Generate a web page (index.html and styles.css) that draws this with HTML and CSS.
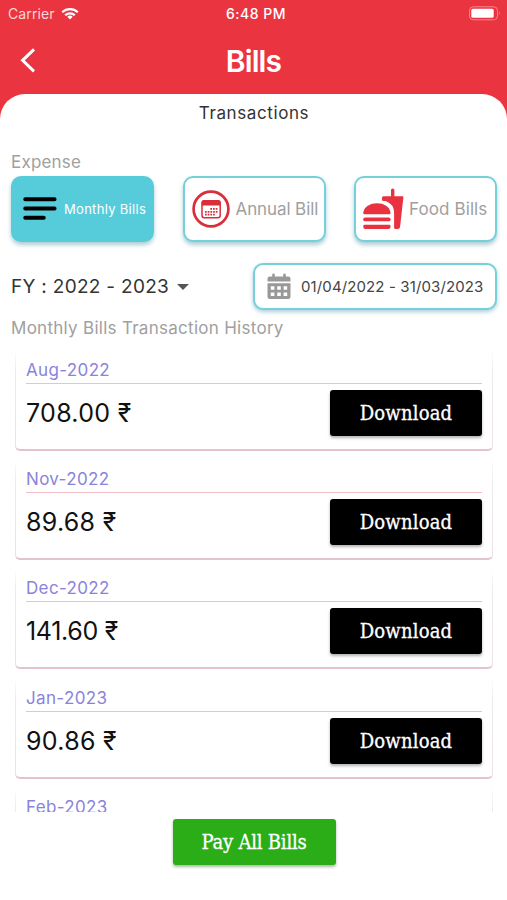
FILE: index.html
```html
<!DOCTYPE html>
<html lang="en">
<head>
  <meta charset="UTF-8" />
  <title>Bills</title>
  <link rel="stylesheet" href="styles.css">
</head>
<body>
  <header class="header">
    <div class="status">
      <div class="carrier">
        <span>Carrier</span>
        <svg width="18" height="13" viewBox="0 0 18 13" fill="none" stroke="#fff" stroke-width="2.2">
          <path d="M1.2 5.2a11.2 11.2 0 0 1 15.6 0M4.2 8.3a6.8 6.8 0 0 1 9.6 0" />
          <path d="M6.3 9.8a3.9 3.9 0 0 1 5.4 0L9 12.5z" fill="#fff" stroke="none" />
        </svg>
      </div>
      <div class="time">6:48 PM</div>
      <svg class="battery" width="32" height="15" viewBox="0 0 32 15">
        <rect x="0.5" y="0.8" width="28" height="13" rx="3.8" fill="none" stroke="#f28a91" />
        <rect x="2.3" y="2.8" width="22.4" height="9" rx="1.6" fill="#fff" />
        <path d="M30 5.3q1.6 2 0 4z" fill="#f6a0a5" />
      </svg>
    </div>
    <div class="navbar">
      <svg class="back" width="16" height="26" viewBox="0 0 16 26" fill="none" stroke="#fff" stroke-width="3">
        <path d="M14 1.4L2.6 12.3l11.4 11" />
      </svg>
      <h1>Bills</h1>
    </div>
  </header>

  <main class="sheet">
    <h2>Transactions</h2>
    <div class="label">Expense</div>

    <div class="tabs">
      <button class="tab active">
        <svg width="34" height="24" viewBox="0 0 34 24" stroke="#000" stroke-width="3.9" stroke-linecap="round">
          <path d="M2.2 2.3h29.4M2.2 11.5h29.4M2.2 20.7h18.6" />
        </svg>
        <span>Monthly Bills</span>
      </button>
      <button class="tab annual">
        <svg width="38" height="38" viewBox="0 0 38 38">
          <circle cx="19" cy="19" r="17.4" fill="none" stroke="#d92f3b" stroke-width="2.7" />
          <rect x="10" y="10.7" width="18.2" height="17" rx="2.2" fill="none" stroke="#d92f3b" stroke-width="1.5" />
          <path d="M9.7 15.5v-3q0-2.2 2.2-2.2h14.4q2.2 0 2.2 2.2v3z" fill="#d92f3b" />
          <path d="M18.3 18.8h8M13 21.8h13.3M13 24.7h10.6" stroke="#d92f3b" stroke-width="1.7" stroke-dasharray="1.7 1" />
        </svg>
        <span>Annual Bill</span>
      </button>
      <button class="tab food">
        <svg width="41" height="42" viewBox="0 0 41 42" fill="#e8323f">
          <path d="M1 26.2q-.8 0-.7-1.6C1.2 18.7 7 15.3 14 15.3s12.6 3.4 13.5 9.3q.1 1.6-.7 1.6z" />
          <rect x="0.2" y="29.5" width="27.4" height="3.8" rx="1.9" />
          <path d="M1.5 36.7h24.8q1.2 0 1.2 1.3v1q0 2-2 2H2.300q-2 0-2-2v-1q0-1.300 1.200-1.300z" />
          <path d="M28 8.200V2q0-1.500 1.700-1.500T31.400 2v6.200h8.100q1 0 .9 1L37.100 38.800q-.3 2.200-2.500 2.200h-2q-1.500 0-1.500-1.500V25q0-9-8.500-12h-2.100q-1.500 0-1.500-1.500v-1.800q0-1.500 1.500-1.500z" />
        </svg>
        <span>Food Bills</span>
      </button>
    </div>

    <div class="filters">
      <div class="year">
        <span>FY : 2022 - 2023</span>
        <i class="caret"></i>
      </div>
      <button class="range">
        <svg width="24" height="27" viewBox="0 0 24 27">
          <path d="M0.5 8.5V5.8q0-2.300 2.300-2.300h2.400V1.500q0-1 1.300-1t1.300 1v2h8.400v-2q0-1 1.300-1t1.300 1v2h2.400q2.300 0 2.300 2.300v2.700z" fill="#999" />
          <path d="M0.5 10.200h23v13.500q0 2.300-2.300 2.300H2.800q-2.300 0-2.300-2.300z" fill="#999" />
          <path d="M3.800 14.900h3.600M10.200 14.900h3.600M16.600 14.900h3.600M3.800 21.200h3.600M10.200 21.200h3.600M16.600 21.200h3.600" stroke="#fff" stroke-width="3.500" />
        </svg>
        <span>01/04/2022 - 31/03/2023</span>
      </button>
    </div>

    <div class="label history">Monthly Bills Transaction History</div>

    <div class="list">
      <div class="bill">
        <div class="month">Aug-2022</div>
        <div class="row">
          <span class="amount">708.00 ₹</span>
          <button class="download">Download</button>
        </div>
      </div>
      <div class="bill">
        <div class="month">Nov-2022</div>
        <div class="row">
          <span class="amount">89.68 ₹</span>
          <button class="download">Download</button>
        </div>
      </div>
      <div class="bill">
        <div class="month">Dec-2022</div>
        <div class="row">
          <span class="amount narrow">141.60 ₹</span>
          <button class="download">Download</button>
        </div>
      </div>
      <div class="bill">
        <div class="month">Jan-2023</div>
        <div class="row">
          <span class="amount">90.86 ₹</span>
          <button class="download">Download</button>
        </div>
      </div>
      <div class="bill">
        <div class="month">Feb-2023</div>
        <div class="row"></div>
      </div>
    </div>

    <button class="pay">Pay All Bills</button>
  </main>
</body>
</html>
```

FILE: styles.css
```css
* {
  box-sizing: border-box;
}

body {
  margin: 0;
  height: 900px;
  overflow: hidden;
  background: #ea3440;
  font-family: Inter, Roboto, sans-serif;
}

button {
  border: none;
  padding: 0;
  font-family: inherit;
}

svg {
  display: block;
  flex: none;
}

h1, h2 {
  margin: 0;
}

span {
  white-space: nowrap;
}

.header {
  height: 94px;
  color: #fff;
}

.status {
  display: grid;
  grid-template-columns: 1fr auto 1fr;
  align-items: center;
  height: 27px;
  padding: 0 6px 0 8px;
}

.carrier {
  display: flex;
  align-items: center;
  gap: 6px;
  font-size: 14px;
  letter-spacing: 0.1px;
  color: #fbd5d7;
}

.time {
  font-size: 14px;
  font-weight: 500;
  letter-spacing: 0.5px;
  padding-left: 3px;
}

.battery {
  justify-self: end;
}

.navbar {
  display: grid;
  grid-template-columns: 60px 1fr 60px;
  align-items: center;
  height: 67px;
}

.back {
  margin-left: 20px;
}

h1 {
  text-align: center;
  font-size: 30px;
  font-weight: 600;
  line-height: 60px;
  letter-spacing: -0.9px;
}

.sheet {
  display: flex;
  flex-direction: column;
  height: 806px;
  padding: 0 10px 0 11px;
  background: #fff;
  border-radius: 25px 25px 0 0;
}

h2 {
  height: 38px;
  line-height: 38px;
  text-align: center;
  font-size: 17px;
  font-weight: 400;
  letter-spacing: 0.6px;
  color: #333;
}

.label {
  margin-top: 18px;
  height: 26px;
  line-height: 24px;
  font-size: 17px;
  letter-spacing: 0.2px;
  color: #a0a0a0;
}

/* Bill categories */
.tabs {
  display: flex;
  justify-content: space-between;
}

.tab {
  display: flex;
  align-items: center;
  width: 143px;
  height: 66px;
  border: 2px solid #76d0da;
  border-radius: 10px;
  background: #fff;
  box-shadow: 0 3px 4px rgba(50, 130, 150, 0.4);
  font-size: 17px;
  color: #a0a0a0;
}

.tab.active {
  padding-left: 10px;
  gap: 7px;
  border-color: #56ccda;
  background: #56ccda;
  color: #fff;
  font-size: 13px;
  letter-spacing: 0.3px;
}

.annual {
  padding-left: 7px;
  gap: 6px;
  letter-spacing: -0.1px;
}

.food {
  padding-left: 7px;
  gap: 5px;
  letter-spacing: 0.1px;
}

/* Year and date range */
.filters {
  display: flex;
  justify-content: space-between;
  margin-top: 21px;
}

.year {
  display: flex;
  align-items: center;
  gap: 8px;
  font-size: 19px;
  letter-spacing: 0.3px;
  color: #333;
}

.caret {
  border: 6px solid transparent;
  border-top-color: #555;
  border-bottom: none;
}

.range {
  display: flex;
  align-items: center;
  gap: 10px;
  width: 244px;
  height: 47px;
  padding: 0 0 1px 12px;
  border: 2px solid #76d0da;
  border-radius: 10px;
  background: #fff;
  box-shadow: 0 2px 4px rgba(50, 130, 150, 0.4);
  font-size: 15px;
  letter-spacing: 0.12px;
  color: #444;
}

.history {
  margin-top: 0;
  height: 35px;
  line-height: 36px;
  letter-spacing: 0.28px;
}

/* Transactions */
.list {
  height: 467px;
  margin: 0 -6px;
  padding: 5px 10px 0;
  overflow: hidden;
}

.bill {
  height: 101px;
  margin-bottom: 8.2px;
  padding: 0 10px;
  border-radius: 5px;
  background: linear-gradient(#fff, #fff) padding-box, linear-gradient(#fff, #ececec 20%, #eee0e3) border-box;
  border: 1px solid transparent;
  border-bottom: 2px solid #e5c3cb;
}

.month {
  height: 33px;
  line-height: 39px;
  border-bottom: 1px solid #f2bfc9;
  font-size: 17px;
  letter-spacing: 0.35px;
  color: #8a83dc;
}

.row {
  display: flex;
  justify-content: space-between;
  align-items: flex-start;
  padding-top: 6px;
}

.amount {
  line-height: 46px;
  font-size: 25px;
  letter-spacing: 0.3px;
  color: #111;
}

.narrow {
  letter-spacing: -0.3px;
}

.download, .pay {
  width: 152px;
  height: 46px;
  border-radius: 3px;
  background: #000;
  box-shadow: 0 2px 3px rgba(0, 0, 0, 0.3);
  color: #fff;
  font-family: "DejaVu Serif Condensed", "DejaVu Serif", serif;
  font-stretch: condensed;
  font-size: 20px;
  letter-spacing: 0.2px;
  -webkit-text-stroke: 0.3px #fff;
}

.pay {
  align-self: center;
  width: 163px;
  margin-top: 7px;
  background: #2aad17;
  letter-spacing: -0.2px;
}
```
